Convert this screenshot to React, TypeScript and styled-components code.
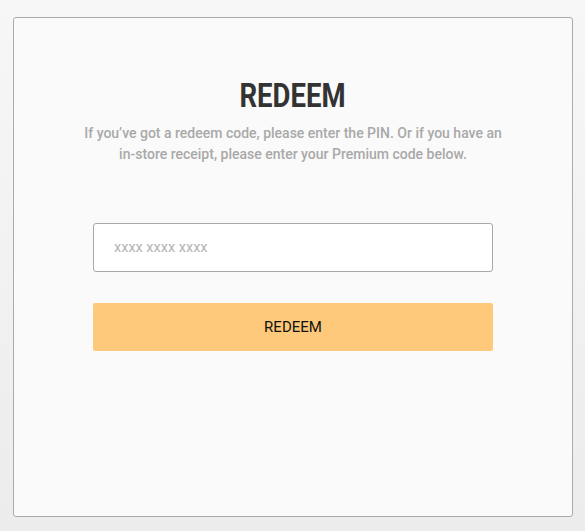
import React from "react";
import styled, { createGlobalStyle } from "styled-components";

const GlobalStyle = createGlobalStyle`
  html, body {
    margin: 0;
    padding: 0;
    height: 100%;
  }
  body {
    background: linear-gradient(180deg, #f7f7f7 0%, #ececec 100%);
    font-family: Roboto, "Liberation Sans", sans-serif;
  }
`;

const Page = styled.div`
  width: 585px;
  height: 531px;
  padding: 17px 12px 0 13px;
  box-sizing: border-box;
`;

const Card = styled.div`
  width: 560px;
  height: 500px;
  box-sizing: border-box;
  background: #fafafa;
  border: 1px solid #ababab;
  border-radius: 3px;
  display: flex;
  flex-direction: column;
  align-items: center;
  padding-top: 57px;
`;

const Title = styled.h1`
  margin: 0;
  font-family: Roboto, "Liberation Sans", sans-serif;
  font-weight: 700;
  font-size: 34px;
  line-height: 40px;
  color: #333333;
  transform: scaleX(0.81);
`;

const Subtitle = styled.p`
  margin: 8px 0 0;
  width: 425px;
  text-align: center;
  font-size: 14px;
  font-weight: 500;
  line-height: 21px;
  color: #a9a9a9;
`;

const Form = styled.form`
  width: 400px;
  margin-top: 58px;
  display: flex;
  flex-direction: column;
  gap: 31px;
`;

const CodeInput = styled.input`
  height: 49px;
  box-sizing: border-box;
  border: 1px solid #a8a8a8;
  border-radius: 3px;
  background: #ffffff;
  padding: 0 20px;
  font-family: Roboto, "Liberation Sans", sans-serif;
  font-size: 14.5px;
  color: #333;
  outline: none;
  &::placeholder {
    color: #b3b3b3;
  }
`;

const SubmitButton = styled.button`
  height: 48px;
  border: none;
  border-radius: 2px;
  background: #fec97b;
  font-family: Roboto, "Liberation Sans", sans-serif;
  font-size: 15px;
  color: #111111;
  cursor: pointer;
`;

export default function App() {
  return (
    <>
      <GlobalStyle />
      <Page>
        <Card>
          <Title>REDEEM</Title>
          <Subtitle>
            If you’ve got a redeem code, please enter the PIN. Or if you have an
            in-store receipt, please enter your Premium code below.
          </Subtitle>
          <Form onSubmit={(e) => e.preventDefault()}>
            <CodeInput placeholder="xxxx xxxx xxxx" />
            <SubmitButton type="submit">REDEEM</SubmitButton>
          </Form>
        </Card>
      </Page>
    </>
  );
}
